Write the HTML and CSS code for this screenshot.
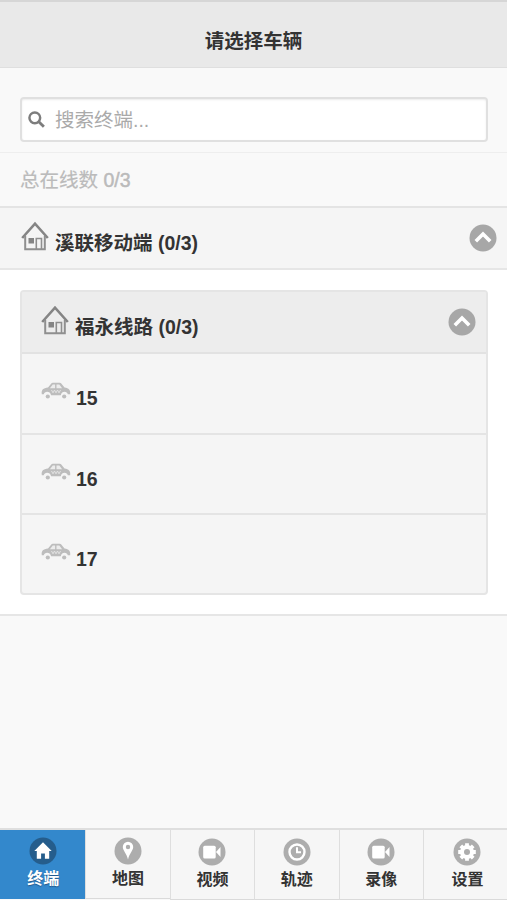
FILE: index.html
```html
<!DOCTYPE html>
<html lang="zh-CN">
<head>
  <meta charset="UTF-8" />
  <meta name="viewport" content="width=device-width, initial-scale=1.0"/>
  <title>请选择车辆</title>
  <link rel="stylesheet" href="styles.css">
</head>
<body>

  <!-- Shared icons -->
  <svg class="hidden">
    <symbol id="house" viewBox="0 0 28 30">
      <path d="M1.2 17 14 2.6 26.800 17" fill="none" stroke="#858585" stroke-width="2.600"/>
      <path d="M4.200 15v13.200h19.600V15" fill="none" stroke="#8f8f8f" stroke-width="2"/>
      <rect x="7.500" y="17" width="5.500" height="5.500" fill="#858585"/>
      <path d="M15.300 28V17.500h5.200V28" fill="none" stroke="#8f8f8f" stroke-width="1.600"/>
    </symbol>
    <symbol id="car" viewBox="0 0 30 18">
      <path d="M.8 12.300C.2 7.500 2.200 6.200 7 5.500l3.300-4c.4-.5.700-.7 1.400-.7h7c.7 0 1.200.3 1.600.8l3.200 4c4.300.7 6.300 2.400 5.700 6.700h-2.400c-.6-3.600-6.400-3.600-7 .9h-9.700c-.7-4.500-6.700-4.500-7.300-.9z" fill="#bdbdbd"/>
      <path d="M11.800 2.600h2.300v3.600H8.900zM15.500 2.600h2.800l2.800 3.600h-5.600z" fill="#ececec"/>
      <path d="m10.500 8 1.500 2.800L13.500 8l1.500 2.800L16.500 8l1.500 2.800L19.500 8" fill="none" stroke="#e5e5e5" stroke-width=".9"/>
      <circle cx="6.800" cy="14.500" r="2.100" fill="#bdbdbd"/>
      <circle cx="23.200" cy="14.500" r="2.100" fill="#bdbdbd"/>
    </symbol>
    <symbol id="up" viewBox="0 0 28 28">
      <circle cx="14" cy="14" r="13.500" fill="#a7a7a7"/>
      <path d="m6.800 17.300 7.200-7.200 7.200 7.200" fill="none" stroke="#fff" stroke-width="3.600"/>
    </symbol>
    <symbol id="camera" viewBox="0 0 28 28">
      <circle cx="14" cy="14" r="13.500" fill="#adadad"/>
      <rect x="5.200" y="7.800" width="12.500" height="12.800" rx="1.500" fill="#fff"/>
      <path d="m18 14 4.500-4.900v9.800z" fill="#fff"/>
    </symbol>
  </svg>

  <div class="header">请选择车辆</div>

  <div class="search">
    <div class="search-box">
      <svg class="search-icon" viewBox="0 0 18 18">
        <circle cx="7.200" cy="7.200" r="5.700" fill="none" stroke="#7d7d7d" stroke-width="2.600"/>
        <path d="m11.200 11.200 5.600 5.600" stroke="#7d7d7d" stroke-width="3"/>
      </svg>
      <input type="text" placeholder="搜索终端..." />
    </div>
  </div>

  <div class="total">总在线数 <b>0/3</b></div>

  <div class="group-title">
    <svg class="house"><use href="#house"/></svg>
    <span>溪联移动端 (0/3)</span>
    <svg class="up"><use href="#up"/></svg>
  </div>

  <!-- Vehicle list -->
  <div class="group-body">
    <div class="line">
      <div class="line-title">
        <svg class="house"><use href="#house"/></svg>
        <span>福永线路 (0/3)</span>
        <svg class="up"><use href="#up"/></svg>
      </div>
      <div class="vehicle"><svg class="car"><use href="#car"/></svg><span>15</span></div>
      <div class="vehicle"><svg class="car"><use href="#car"/></svg><span>16</span></div>
      <div class="vehicle"><svg class="car"><use href="#car"/></svg><span>17</span></div>
    </div>
  </div>

  <!-- Bottom tabs -->
  <div class="tabs">
    <div class="tab active">
      <svg viewBox="0 0 28 28">
        <circle cx="14" cy="14" r="13.500" fill="#255d8c"/>
        <path d="m14 5.300 8.700 8.800h-2.500v7.600h-4.300v-5.200h-3.800v5.200H7.800v-7.600H5.300z" fill="#fff"/>
      </svg>
      <span>终端</span>
    </div>
    <div class="tab map">
      <svg viewBox="0 0 28 28">
        <circle cx="14" cy="14" r="13.500" fill="#adadad"/>
        <path d="M14 4.800a5.200 5.200 0 0 0-5.200 5.200c0 3.500 3.700 6 5.200 12.600 1.500-6.600 5.200-9.100 5.200-12.600A5.200 5.200 0 0 0 14 4.800zm0 3a2.200 2.200 0 1 1 0 4.400 2.200 2.200 0 0 1 0-4.400z" fill="#fff"/>
      </svg>
      <span>地图</span>
    </div>
    <div class="tab">
      <svg><use href="#camera"/></svg>
      <span>视频</span>
    </div>
    <div class="tab">
      <svg viewBox="0 0 28 28">
        <circle cx="14" cy="14" r="13.500" fill="#adadad"/>
        <circle cx="14" cy="14" r="7.500" fill="none" stroke="#fff" stroke-width="2.400"/>
        <path d="M14 9.200v5h4" fill="none" stroke="#fff" stroke-width="2"/>
      </svg>
      <span>轨迹</span>
    </div>
    <div class="tab">
      <svg><use href="#camera"/></svg>
      <span>录像</span>
    </div>
    <div class="tab">
      <svg viewBox="0 0 28 28">
        <circle cx="14" cy="14" r="13.500" fill="#adadad"/>
        <path d="M14 5.200v17.600M5.200 14h17.600M7.800 7.800l12.400 12.400M7.800 20.200 20.200 7.800" stroke="#fff" stroke-width="3.800"/>
        <circle cx="14" cy="14" r="7" fill="#fff"/>
        <circle cx="14" cy="14" r="3" fill="#adadad"/>
      </svg>
      <span>设置</span>
    </div>
  </div>

</body>
</html>
```

FILE: styles.css
```css
* { box-sizing: border-box; }
body {
  margin: 0;
  height: 900px;
  display: flex;
  flex-direction: column;
  overflow: hidden;
  background-color: #f9f9f9;
  color: #333;
  font-family: 'Liberation Sans', 'Noto Sans CJK SC', sans-serif;
  font-size: 19.5px;
  line-height: 28px;
}

svg {
  display: block;
  flex-shrink: 0;
}

.header {
  height: 68px;
  padding-top: 25px;
  background-color: #e9e9e9;
  border-top: 2px solid #d6d6d6;
  border-bottom: 1px solid #dfdfdf;
  text-align: center;
  font-weight: bold;
}

.search {
  height: 85px;
  padding: 29px 19px 10px 20px;
  border-bottom: 1px solid #eee;
}

.search-box {
  display: flex;
  align-items: center;
  height: 45px;
  padding-left: 6px;
  background-color: #fff;
  border: 2px solid #e0e0e0;
  border-radius: 4px;
  box-shadow: inset 0 1px 2px rgba(0, 0, 0, 0.08);
}

.search-icon {
  width: 17px;
  height: 17px;
}

input {
  flex: 1;
  min-width: 0;
  margin-left: 10px;
  padding: 0;
  border: none;
  background: none;
  font: inherit;
}

input::placeholder { color: #aaa; }

.total {
  height: 53px;
  padding: 13px 20px;
  color: #bbb;
  -webkit-text-stroke: 0.2px #bbb;
}

.total b { font-weight: normal; -webkit-text-stroke: 0.5px #bbb; }

.group-title, .line-title {
  display: flex;
  font-weight: bold;
}

.group-title {
  height: 64px;
  padding: 13px 10px 0 21px;
  background-color: #f5f5f5;
  border-top: 2px solid #e4e4e4;
  border-bottom: 2px solid #e6e6e6;
}

.house {
  width: 28px;
  height: 30px;
}

.group-title span, .line-title span {
  margin: 8px auto 0 6px;
}

.up {
  width: 28px;
  height: 28px;
  margin-top: 3px;
}

.group-body {
  height: 346px;
  padding: 20px 19px 0 20px;
  background-color: #fff;
  border-bottom: 2px solid #e6e6e6;
}

.line {
  height: 305px;
  border: 2px solid #e5e5e5;
  border-radius: 4px;
  background-color: #f5f5f5;
  overflow: hidden;
}

.line-title {
  height: 62px;
  padding: 13px 10px 0 19px;
  background-color: #ededed;
  border-bottom: 2px solid #e2e2e2;
}

.vehicle {
  display: flex;
  height: 80.5px;
  padding: 28px 0 0 19px;
  border-bottom: 2px solid #e4e4e4;
  font-weight: bold;
}

.vehicle:last-child { border-bottom: none; }

.car {
  width: 30px;
  height: 18px;
}

.vehicle span { margin: 2px 0 0 5px; }

/* Bottom tabs */
.tabs {
  display: flex;
  height: 72px;
  margin-top: auto;
  border-top: 2px solid #dfdfdf;
}

.tab {
  display: flex;
  flex: 0 0 84.4px;
  flex-direction: column;
  align-items: center;
  height: 70px;
  padding-top: 8px;
  background-color: #f6f6f6;
  border-left: 1px solid #dedede;
  border-bottom: 1px solid #dadada;
  font-size: 16px;
  font-weight: bold;
  line-height: 24px;
}

.tab svg {
  width: 28px;
  height: 28px;
}

.tab span { margin-top: 2px; }

.tab.active, .tab.map {
  height: 69px;
  padding-top: 7px;
}

.tab.active {
  flex-basis: 85.4px;
  background-color: #3388cc;
  border-color: #3388cc;
  color: #fff;
  text-shadow: 0 1px 1px #225588;
}

.tab:last-child { flex-basis: 88px; }

.hidden {
  display: none;
}
```
